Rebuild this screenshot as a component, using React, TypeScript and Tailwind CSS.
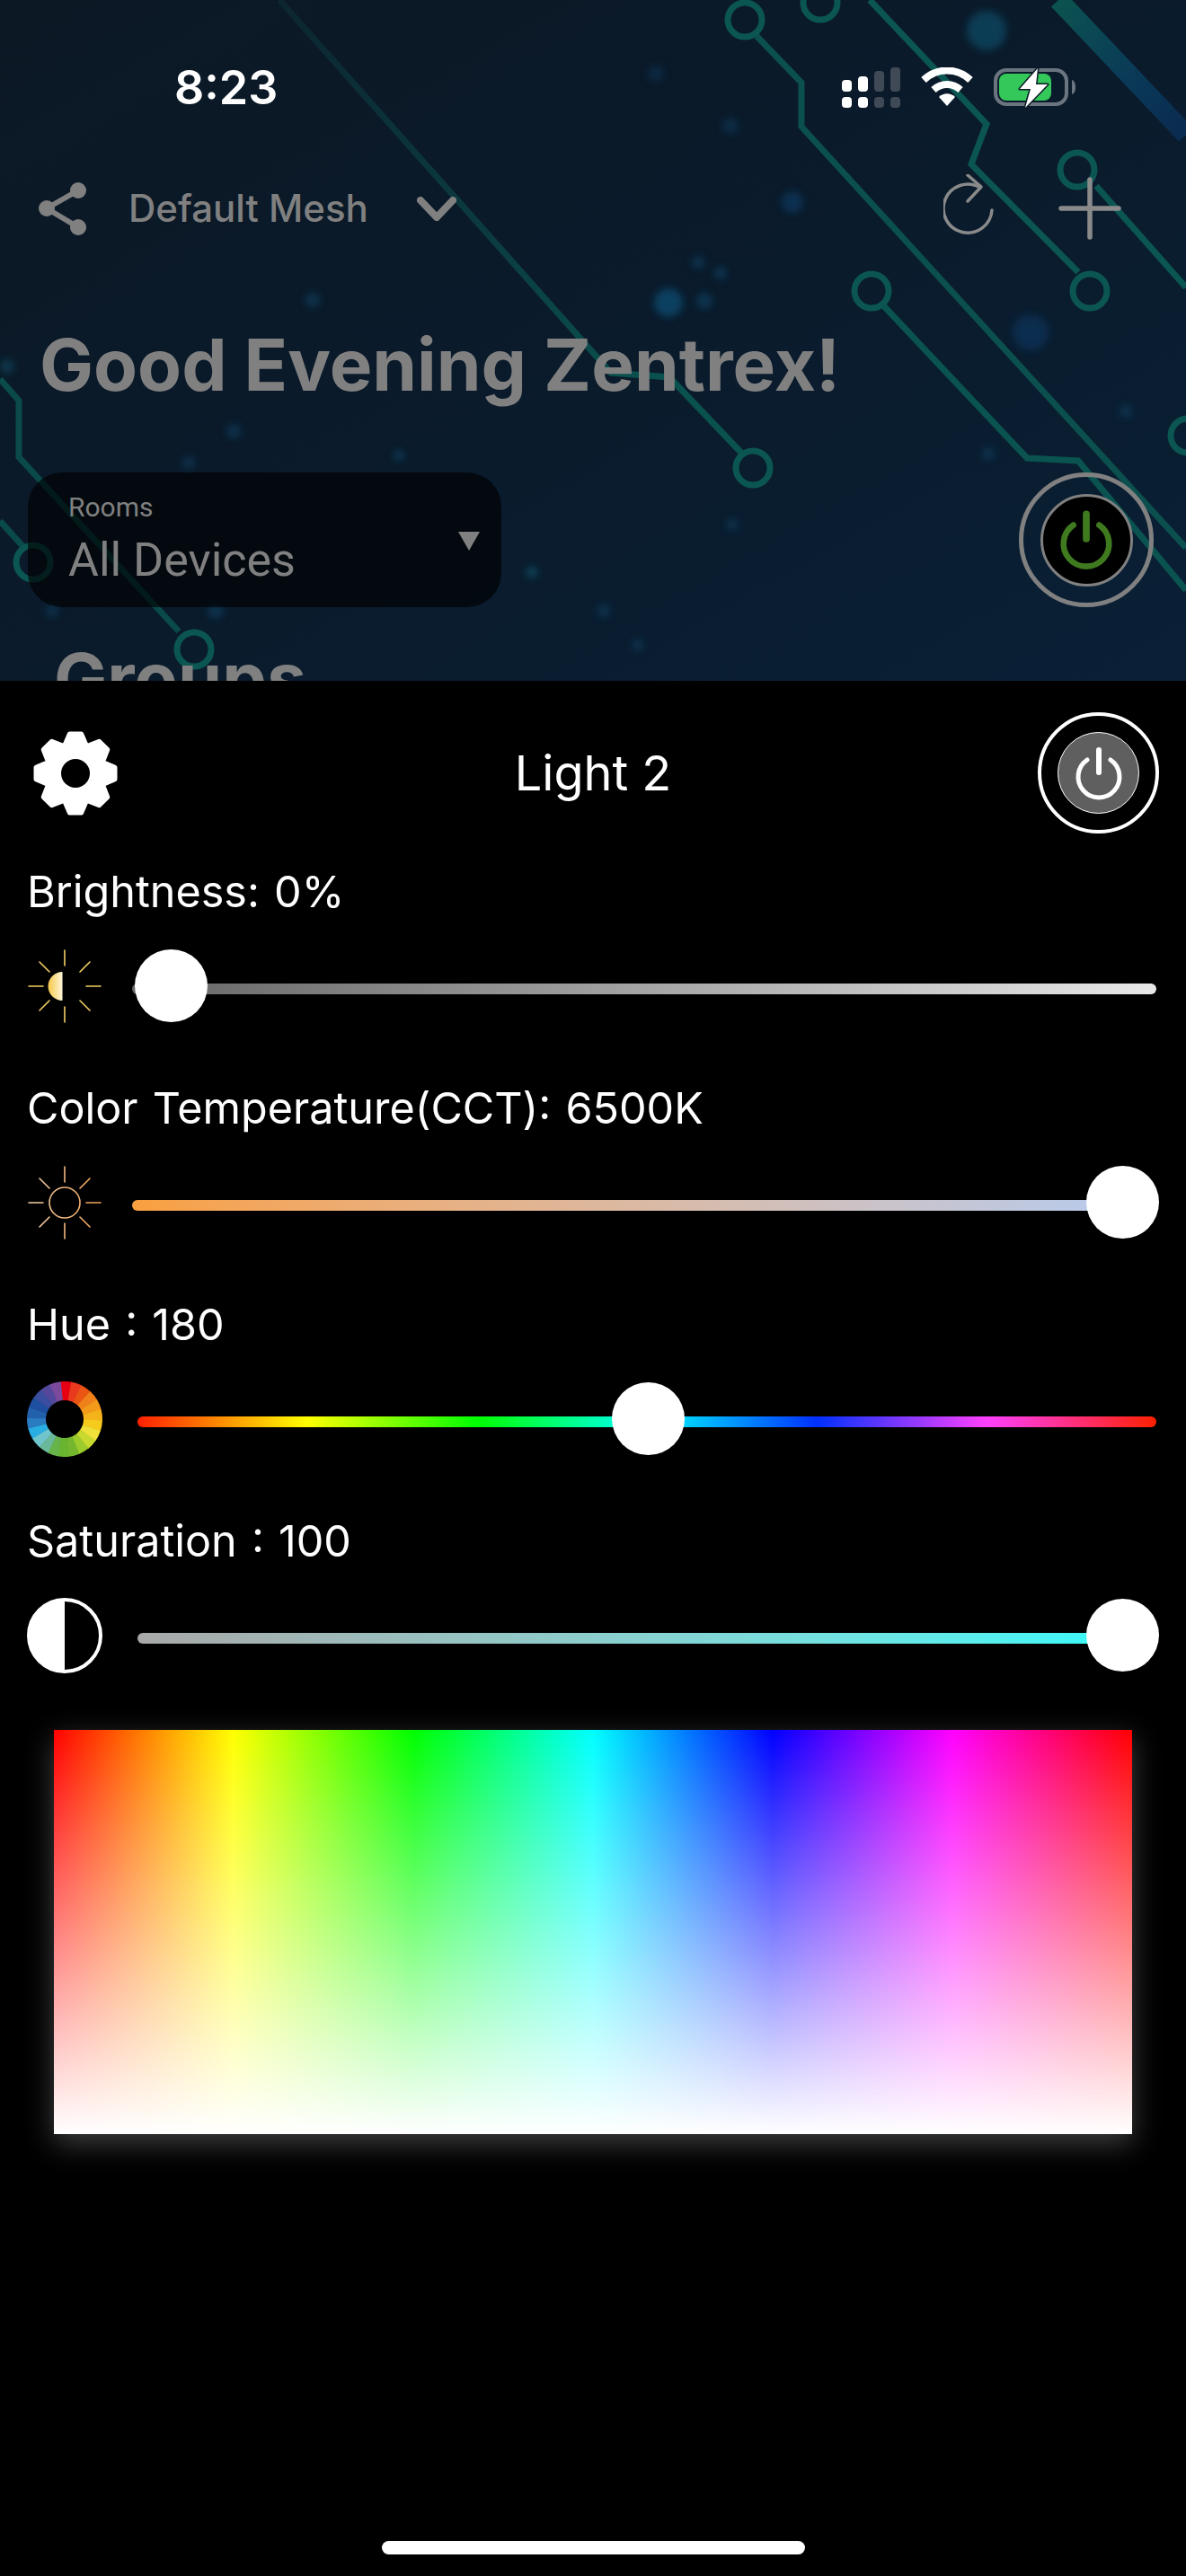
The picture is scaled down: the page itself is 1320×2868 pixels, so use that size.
const sans = "font-['Inter',sans-serif]";

const TRACES = [
  { d: "M311 0 L680 415 L745 420 L826 505", color: "url(#fadeTop)" },
  { d: "M842 40 L892 92 L892 141 L1320 610", color: "#0b4f4e" },
  { d: "M968 0 L1098 138 L1081 183 L1200 303", color: "#0b5652" },
  { d: "M1220 207 L1320 320", color: "#0b5652" },
  { d: "M983 340 L1143 510 L1200 513 L1320 657", color: "#0a5350" },
  { d: "M0 422 L21 446 L21 509 L199 703", color: "#0a4a4a" },
  { d: "M0 580 L27 610", color: "#0a4a4a" },
];

const RINGS = [
  [829, 22],
  [913, 3],
  [970, 324],
  [1199, 189],
  [1213, 324],
  [838, 521],
  [216, 723],
  [37, 626],
  [1322, 485],
];

const GLOWS = [
  [1098, 34, 22, "#0e5a78"],
  [744, 337, 16, "#0b5f8c"],
  [784, 335, 9, "#0e4a70"],
  [882, 225, 12, "#0e4270"],
  [1147, 370, 20, "#0c3a68"],
  [730, 82, 9, "#0c3454"],
  [813, 140, 9, "#0c3a5c"],
  [777, 292, 7, "#0e4a6c"],
  [802, 304, 7, "#0e4a6c"],
  [348, 334, 8, "#0e4a6c"],
  [444, 507, 6, "#0e5070"],
  [210, 515, 7, "#0e4468"],
  [815, 584, 6, "#0e4a6c"],
  [592, 637, 6, "#0e7080"],
  [672, 680, 7, "#0e4468"],
  [710, 718, 6, "#0e4a6c"],
  [1253, 458, 7, "#0e4468"],
  [260, 480, 8, "#0e4468"],
  [58, 680, 7, "#0e4468"],
  [240, 680, 9, "#0e4468"],
  [8, 408, 8, "#0e5068"],
  [1100, 505, 7, "#0e4468"],
] as const;

function CircuitBackground() {
  return (
    <svg viewBox="0 0 1320 758" className="absolute inset-0 h-full w-full">
      <defs>
        <filter id="soft" x="-50%" y="-50%" width="200%" height="200%">
          <feGaussianBlur stdDeviation="4" />
        </filter>
        <linearGradient id="band" gradientUnits="userSpaceOnUse" x1="1178" y1="0" x2="1320" y2="131">
          <stop offset="0%" stopColor="#0c5350" />
          <stop offset="60%" stopColor="#0a3a58" />
          <stop offset="100%" stopColor="#0a2c50" />
        </linearGradient>
        <linearGradient id="fadeTop" gradientUnits="userSpaceOnUse" x1="311" y1="0" x2="745" y2="420">
          <stop offset="0%" stopColor="#0c2630" />
          <stop offset="55%" stopColor="#0b3a40" />
          <stop offset="100%" stopColor="#0a524e" />
        </linearGradient>
      </defs>
      <g filter="url(#soft)" opacity="0.55">
        {GLOWS.map(([x, y, r, color]) => (
          <circle key={`${x}-${y}`} cx={x} cy={y} r={r} fill={color} />
        ))}
      </g>
      <path d="M1178 0 L1320 150" stroke="url(#band)" strokeWidth="22" fill="none" />
      {TRACES.map((t) => (
        <path key={t.d} d={t.d} stroke={t.color} strokeWidth="7" fill="none" />
      ))}
      {RINGS.map(([x, y]) => (
        <circle key={`${x}-${y}`} cx={x} cy={y} r="19" stroke="#0b5652" strokeWidth="7" fill="none" />
      ))}
    </svg>
  );
}

function StatusIcons() {
  return (
    <div className="ml-auto flex items-center gap-[23px] pr-[123px]">
      <svg width="65" height="46" viewBox="0 0 65 46">
        <rect x="0" y="14" width="11" height="13" rx="4" fill="#fff" />
        <rect x="18" y="10" width="11" height="17" rx="4" fill="#fff" />
        <rect x="36" y="4" width="11" height="23" rx="4" fill="#3f4a56" />
        <rect x="54" y="0" width="11" height="27" rx="4" fill="#3f4a56" />
        <rect x="0" y="33" width="11" height="12" rx="4" fill="#fff" />
        <rect x="18" y="33" width="11" height="12" rx="4" fill="#fff" />
        <rect x="36" y="33" width="11" height="12" rx="4" fill="#3f4a56" />
        <rect x="54" y="33" width="11" height="12" rx="4" fill="#3f4a56" />
      </svg>
      <svg width="58" height="46" viewBox="0 0 58 46">
        <path d="M3 14 C18 0 40 0 55 14" stroke="#fff" strokeWidth="8" fill="none" />
        <path d="M14 25 C23 17 35 17 44 25" stroke="#fff" strokeWidth="8" fill="none" />
        <path d="M20 33 C25 28 33 28 38 33 L29 43 Z" fill="#fff" />
      </svg>
      <svg width="91" height="46" viewBox="0 0 91 46">
        <rect x="2" y="3" width="79" height="38" rx="12" stroke="#6b7580" strokeWidth="4" fill="none" />
        <rect x="6" y="7" width="58" height="30" rx="8" fill="#34c759" />
        <path d="M87 14 C90 15 91 18 91 22 C91 26 90 29 87 30 Z" fill="#6b7580" />
        <path
          d="M49 1 L29 24 L41 24 L35 45 L60 19 L47 19 Z"
          fill="#fff"
          stroke="#0c1a28"
          strokeWidth="3"
          strokeLinejoin="round"
          paintOrder="stroke"
        />
      </svg>
    </div>
  );
}

function ShareIcon() {
  return (
    <svg width="54" height="60" viewBox="0 0 54 60" fill="#808080" stroke="#808080">
      <path d="M45 10 L10 30 L45 51" strokeWidth="6" fill="none" />
      <circle cx="45" cy="10" r="9" stroke="none" />
      <circle cx="10" cy="30" r="9" stroke="none" />
      <circle cx="45" cy="51" r="9" stroke="none" />
    </svg>
  );
}

function RefreshIcon() {
  return (
    <svg width="56" height="76" viewBox="0 0 56 76" fill="none" stroke="#8a8a8a" strokeWidth="3.5" strokeLinecap="round" strokeLinejoin="round">
      <path d="M54 40 A27 27 0 1 1 41 15" />
      <path d="M27 1 L42 14 L27 30" />
    </svg>
  );
}

function PlusIcon() {
  return (
    <svg width="70" height="70" viewBox="0 0 70 70" stroke="#8a8a8a" strokeWidth="5.5" strokeLinecap="round">
      <path d="M35 3 L35 67 M3 35 L67 35" />
    </svg>
  );
}

function PowerGlyph({ color, size, arc, bar }: { color: string; size: number; arc: number; bar: number }) {
  return (
    <svg width={size} height={size} viewBox="0 0 60 60" fill="none" stroke={color} strokeLinecap="round">
      <path d="M17 15 A23 23 0 1 0 43 15" strokeWidth={arc} />
      <path d="M30 4 L30 29" strokeWidth={bar} />
    </svg>
  );
}

// Eight-tooth settings gear, rounded by the stroke join
function gearPath() {
  const pts: string[] = [];
  for (let i = 0; i < 8; i++) {
    const a = (i * 45 - 90) * (Math.PI / 180);
    const corners: [number, number][] = [
      [-0.37, 33.5],
      [-0.15, 44.5],
      [0.15, 44.5],
      [0.37, 33.5],
    ];
    corners.forEach(([off, r]) => {
      const x = 47 + r * Math.cos(a + off);
      const y = 47 + r * Math.sin(a + off);
      pts.push(`${x.toFixed(1)} ${y.toFixed(1)}`);
    });
  }
  return `M${pts.join(" L")} Z`;
}

function GearIcon() {
  return (
    <svg width="94" height="94" viewBox="0 0 94 94">
      <path d={gearPath()} fill="#fff" stroke="#fff" strokeWidth="5" strokeLinejoin="round" />
      <circle cx="47" cy="47" r="16" fill="#000" />
    </svg>
  );
}

const RAYS = [
  "M42 2 L42 19",
  "M42 65 L42 82",
  "M2 42 L18 42",
  "M66 42 L82 42",
  "M14 15 L25 26",
  "M70 15 L59 26",
  "M14 69 L25 58",
  "M70 69 L59 58",
];

function HalfSunIcon() {
  return (
    <svg width="84" height="84" viewBox="0 0 84 84" fill="none">
      <defs>
        <linearGradient id="halfSun" x1="0" y1="0" x2="1" y2="0">
          <stop offset="0%" stopColor="#f5c84a" />
          <stop offset="100%" stopColor="#fff6d8" />
        </linearGradient>
      </defs>
      <g stroke="#f2cf62" strokeWidth="1.6" strokeLinecap="round">
        {RAYS.map((d) => (
          <path key={d} d={d} />
        ))}
      </g>
      <path d="M39.5 26 A16 16 0 0 0 39.5 58 Z" fill="url(#halfSun)" />
    </svg>
  );
}

function SunIcon() {
  return (
    <svg width="84" height="84" viewBox="0 0 84 84" fill="none">
      <defs>
        <linearGradient id="sun" gradientUnits="userSpaceOnUse" x1="0" y1="42" x2="84" y2="42">
          <stop offset="0%" stopColor="#f0d0b0" />
          <stop offset="100%" stopColor="#f2a050" />
        </linearGradient>
      </defs>
      <g stroke="url(#sun)" strokeWidth="1.6" strokeLinecap="round">
        {RAYS.map((d) => (
          <path key={d} d={d} />
        ))}
        <circle cx="42" cy="42" r="17" />
      </g>
    </svg>
  );
}

const WHEEL = [
  "#e60012", "#e93a1e", "#ea5514", "#f08019", "#f39a1a", "#f5b31a", "#f6cb1c", "#f0e13a",
  "#c8d92f", "#9ccb2c", "#74b72e", "#6ab52f", "#66b44a", "#6ab89a", "#70c4cc", "#29aee4",
  "#2a7cc0", "#2260ac", "#1e4fa0", "#3a4d9e", "#54489c", "#7c4a9c",
];

function HueIcon() {
  const n = WHEEL.length;
  const seg = (i: number) => {
    const a0 = ((i - 0.4) / n) * 2 * Math.PI - Math.PI / 2;
    const a1 = ((i + 0.65) / n) * 2 * Math.PI - Math.PI / 2;
    const p = (r: number, a: number) => `${(42 + r * Math.cos(a)).toFixed(2)} ${(42 + r * Math.sin(a)).toFixed(2)}`;
    return `M${p(42, a0)} A42 42 0 0 1 ${p(42, a1)} L${p(21, a1)} A21 21 0 0 0 ${p(21, a0)} Z`;
  };
  return (
    <svg width="84" height="84" viewBox="0 0 84 84">
      {WHEEL.map((c, i) => (
        <path key={c} d={seg(i)} fill={c} />
      ))}
    </svg>
  );
}

function ContrastIcon() {
  return (
    <svg width="84" height="84" viewBox="0 0 84 84">
      <circle cx="42" cy="42" r="40" fill="#000" stroke="#fff" strokeWidth="4" />
      <path d="M42 2 A40 40 0 0 0 42 82 Z" fill="#fff" />
    </svg>
  );
}

const SLIDERS = [
  {
    label: "Brightness: 0%",
    icon: <HalfSunIcon />,
    trackLeft: "ml-[33px]",
    track: "bg-linear-to-r from-[#666666] to-[#e8e8e8]",
    thumbX: 3,
  },
  {
    label: "Color Temperature(CCT): 6500K",
    icon: <SunIcon />,
    trackLeft: "ml-[33px]",
    track: "bg-linear-to-r from-[#f9a03f] to-[#b4ccf2]",
    thumbX: 1062,
  },
  {
    label: "Hue : 180",
    icon: <HueIcon />,
    trackLeft: "ml-[39px]",
    track: "bg-[linear-gradient(90deg,#ff2000,#ffff00,#00ff00,#00ffff,#0030ff,#ff40ff,#ff2000)]",
    thumbX: 528,
  },
  {
    label: "Saturation : 100",
    icon: <ContrastIcon />,
    trackLeft: "ml-[39px]",
    track: "bg-linear-to-r from-[#a8a8a8] to-[#1ffcfc]",
    thumbX: 1056,
  },
];

export default function App() {
  return (
    <div className={`flex h-[2868px] w-[1320px] flex-col overflow-hidden bg-black ${sans}`}>
      <div className="relative h-[758px] shrink-0 overflow-hidden bg-[linear-gradient(150deg,#0c1824,#0a1b2c_55%,#0a2036)]">
        <CircuitBackground />
        <div className="relative flex flex-col">
          <div className="mt-[68px] flex h-[60px] items-center pl-[194px]">
            <span className="text-[52px] font-semibold leading-[60px] text-white">8:23</span>
            <StatusIcons />
          </div>

          <div className="mt-[74px] flex h-[60px] items-center pl-[42px] pr-[72px]">
            <ShareIcon />
            <span className="ml-[47px] text-[42px] font-medium leading-[60px] text-[#808080]">Default Mesh</span>
            <svg className="ml-[54px]" width="44" height="27" viewBox="0 0 44 27" fill="none" stroke="#808080" strokeWidth="8" strokeLinecap="round" strokeLinejoin="round">
              <path d="M4 4 L22 23 L40 4" />
            </svg>
            <div className="ml-auto flex items-center gap-[72px]">
              <RefreshIcon />
              <PlusIcon />
            </div>
          </div>

          <h1 className="mt-[98px] pl-[44px] text-[80px] font-bold leading-[92px] text-[#808080]">Good Evening Zentrex!</h1>

          <div className="mt-[74px] flex items-center pl-[31px] pr-[36px]">
            <div className="relative h-[150px] w-[527px] rounded-[38px] bg-black/65 pl-[45px] pt-[22px] font-['Roboto',sans-serif] text-[#808080]">
              <div className="text-[30px] leading-[34px]">Rooms</div>
              <div className="mt-[12px] text-[52px] leading-[60px]">All Devices</div>
              <div className="absolute right-[24px] top-[66px] h-0 w-0 border-x-[12px] border-t-[21px] border-x-transparent border-t-[#808080]" />
            </div>
            <div className="ml-auto flex h-[150px] w-[150px] items-center justify-center rounded-full border-[5px] border-[#808080]">
              <div className="flex h-[103px] w-[103px] items-center justify-center rounded-full border-[3px] border-[#808080] bg-black">
                <PowerGlyph color="#3f7a1f" size={66} arc={6} bar={7} />
              </div>
            </div>
          </div>

          <h2 className="mt-[33px] pl-[60px] text-[79px] font-bold leading-[92px] text-[#808080]">Groups</h2>
        </div>
      </div>

      <div className="flex flex-1 flex-col">
        <div className="mt-[35px] flex h-[135px] items-center pl-[37px] pr-[30px]">
          <GearIcon />
          <div className="flex-1 pl-[34px] text-center text-[54px] leading-[64px] text-white">Light 2</div>
          <div className="flex h-[135px] w-[135px] items-center justify-center rounded-full border-[4px] border-white">
            <div className="flex h-[91px] w-[91px] items-center justify-center rounded-full border-[1.5px] border-white bg-[#5f5f5f]">
              <PowerGlyph color="#fff" size={60} arc={5} bar={6} />
            </div>
          </div>
        </div>

        <div className="mt-[35px] flex flex-col gap-[66px]">
          {SLIDERS.map((s) => (
            <div key={s.label} className="flex flex-col gap-[34px]">
              <div className="pl-[30px] text-[48.5px] leading-[60px] text-white [word-spacing:2.5px]">{s.label}</div>
              <div className="flex h-[81px] items-center pl-[30px] pr-[33px]">
                {s.icon}
                <div className={`relative mt-[7px] h-[12px] flex-1 rounded-full ${s.trackLeft} ${s.track}`}>
                  <div
                    className="absolute top-[-38px] h-[81px] w-[81px] rounded-full bg-white"
                    style={{ left: s.thumbX }}
                  />
                </div>
              </div>
            </div>
          ))}
        </div>

        <div className="mx-[60px] mt-[65px] h-[450px] bg-[linear-gradient(to_bottom,rgba(255,255,255,0),#ffffff),linear-gradient(to_right,#ff0000,#ffff00,#00ff00,#00ffff,#0000ff,#ff00ff,#ff0000)] shadow-[0_10px_30px_rgba(255,255,255,0.25)]" />

        <div className="mb-[24px] mt-auto h-[15px] w-[471px] self-center rounded-full bg-white" />
      </div>
    </div>
  );
}
